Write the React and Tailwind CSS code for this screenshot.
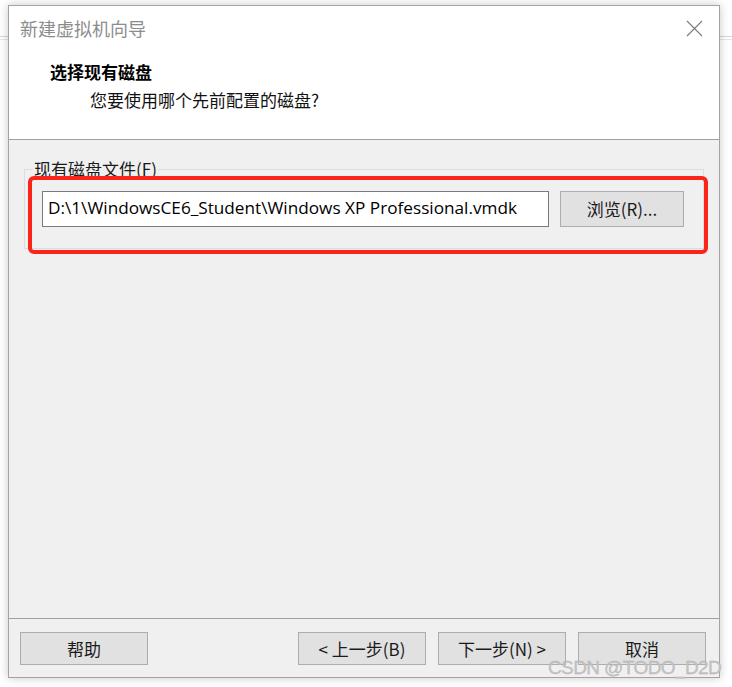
import React from 'react';

const cjk = '"Noto Sans CJK SC", "Noto Sans", sans-serif';

const WinButton = ({ children, className = '' }) => (
    <button
        className={`h-[33px] w-[128px] border border-[#adadad] bg-[#e1e1e1] text-[17px] leading-none text-[#1b1b1b] ${className}`}
        style={{ fontFamily: cjk }}
    >
        {children}
    </button>
);

const App = () => {
    return (
        <div className="relative w-[732px] h-[687px] overflow-hidden bg-white pl-[8px] pt-[5px]" style={{ fontFamily: cjk }}>
            {/* window behind the dialog */}
            <div className="absolute left-0 right-0 top-[36px] h-px bg-[#d6d6d6]" />
            <div className="absolute left-0 right-0 top-[39px] h-px bg-[#e6e6e6]" />

            <div className="relative flex flex-col w-[712px] h-[673px] border border-[#a3a3a3] bg-[#f0f0f0] shadow-[0_0_9px_rgba(0,0,0,0.22)]">
                {/* header */}
                <div className="relative h-[134px] bg-white border-b border-[#a0a0a0]">
                    <div className="flex items-start justify-between pl-[11px] pr-[16px] pt-[9px]">
                        <span className="text-[18px] leading-[26px] text-[#8c8c8c]">新建虚拟机向导</span>
                        <svg width="17" height="17" viewBox="0 0 17 17" className="mt-[5px]">
                            <path d="M1 1 L16 16 M16 1 L1 16" stroke="#7a7a7a" strokeWidth="1.1" fill="none" />
                        </svg>
                    </div>
                    <div className="pl-[41px] pt-[19px] text-[17px] leading-[24px] font-bold text-black">选择现有磁盘</div>
                    <div className="pl-[81px] pt-[4px] text-[17px] leading-[24px] text-[#111]">您要使用哪个先前配置的磁盘?</div>
                </div>

                {/* body */}
                <div className="relative flex-1 px-[15px] pt-[19px]">
                    <fieldset className="h-[90px] border border-[#dcdcdc]">
                        <legend className="ml-[8px] px-px text-[17px] leading-[20px] text-[#1b1b1b]">现有磁盘文件(F)</legend>
                        <div className="flex gap-[11px] pl-[17px] pr-[19px] pt-[12px]">
                            <div
                                className="flex h-[36px] w-[507px] items-center border border-[#7a7a7a] bg-white pb-[3px] pl-[5px] text-[17.2px] text-black"
                                style={{ fontFamily: '"Open Sans", "Noto Sans", sans-serif' }}
                            >
                                D:\1\WindowsCE6_Student\Windows XP Professional.vmdk
                            </div>
                            <button className="h-[36px] w-[124px] border border-[#adadad] bg-[#e1e1e1] text-[17px] text-[#1b1b1b]">
                                浏览(R)...
                            </button>
                        </div>
                    </fieldset>
                    {/* red annotation */}
                    <div className="absolute left-[19px] top-[36px] h-[78px] w-[680px] rounded-[6px] border-[4px] border-[#fc2419]" />
                </div>

                {/* footer */}
                <div className="flex h-[59px] border-t border-[#a0a0a0] pl-[11px] pr-[13px] pt-[13px]">
                    <WinButton>帮助</WinButton>
                    <div className="ml-auto flex gap-[12px]">
                        <WinButton>&lt; 上一步(B)</WinButton>
                        <WinButton>下一步(N) &gt;</WinButton>
                        <WinButton>取消</WinButton>
                    </div>
                </div>
            </div>

            {/* watermark */}
            <div
                className="absolute left-[548px] top-[656px] text-[19px] leading-[24px] tracking-[-0.6px] text-[#c4c4c4]"
                style={{ fontFamily: '"Liberation Sans Narrow", "Liberation Sans", sans-serif', WebkitTextStroke: '0.3px #b0b0b0' }}
            >
                CSDN @TODO_D2D
            </div>
        </div>
    );
};

export default App;
